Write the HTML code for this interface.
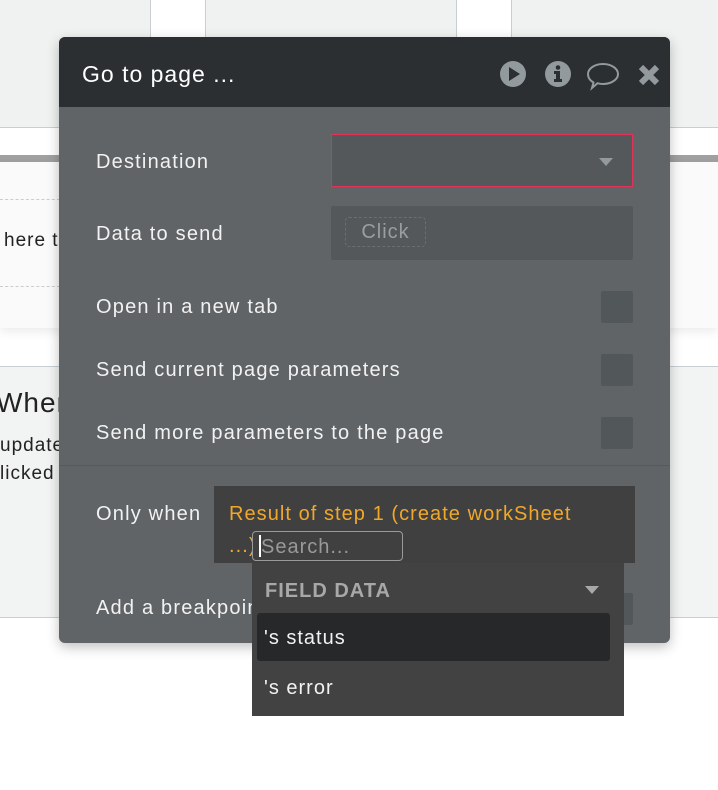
<!DOCTYPE html>
<html><head><style>
*{margin:0;padding:0;box-sizing:border-box}
body{width:718px;height:790px;position:relative;overflow:hidden;background:#fff;font-family:"Liberation Sans",sans-serif;letter-spacing:1px}
.a{position:absolute}
.lbl{position:absolute;left:96px;color:#f2f2f2;font-size:20px;line-height:24px;letter-spacing:1.2px}
.cb{position:absolute;left:601px;width:32px;height:32px;background:#52575a;border-radius:2px}
</style></head><body>
<div class="a" style="left:0;top:0;width:718px;height:128px;background:#f0f2f1;border-bottom:1px solid #c8ced2"></div>
<div class="a" style="left:150px;top:0;width:56px;height:128px;background:#fff;border-left:1px solid #c8ced2;border-right:1px solid #c8ced2"></div>
<div class="a" style="left:456px;top:0;width:56px;height:128px;background:#fff;border-left:1px solid #c8ced2;border-right:1px solid #c8ced2"></div>
<div class="a" style="left:0;top:155px;width:718px;height:7px;background:#a0a0a0"></div>
<div class="a" style="left:0;top:162px;width:718px;height:166px;background:#fafafa;box-shadow:0 4px 10px rgba(0,0,0,.08)"></div>
<div class="a" style="left:0;top:199px;width:60px;border-top:1px dashed #ccc"></div>
<div class="a" style="left:0;top:286px;width:60px;border-top:1px dashed #ccc"></div>
<div class="a" style="left:4px;top:230px;font-size:19px;color:#222">here t</div>
<div class="a" style="left:0;top:366px;width:718px;height:252px;background:#f2f3f3;border-top:1px solid #c8ced2;border-bottom:1px solid #c8ced2"></div>
<div class="a" style="left:-4px;top:387px;font-size:28px;color:#222">When</div>
<div class="a" style="left:0;top:432px;font-size:19px;color:#222;line-height:28px">update<br>licked</div>
<div class="a" style="left:59px;top:37px;width:611px;height:606px;background:#606467;border-radius:6px;box-shadow:0 4px 12px rgba(0,0,0,.25);overflow:hidden">
 <div class="a" style="left:0;top:0;width:611px;height:70px;background:#2b2f31"></div>
 <div class="a" style="left:23px;top:24px;color:#fff;font-size:23px;letter-spacing:1px">Go to page ...</div>
 <svg class="a" style="left:440px;top:22px" width="125" height="32" viewBox="0 0 125 32">
  <circle cx="14" cy="15" r="13" fill="#939a9e"/><path d="M10 8 L21 15 L10 22Z" fill="#2b2f31"/>
  <circle cx="59" cy="15" r="13" fill="#939a9e"/><circle cx="59" cy="8.5" r="2.3" fill="#2b2f31"/><path d="M55 12h6v8h2v3h-8v-3h2v-5h-2z" fill="#2b2f31"/>
  <path d="M104 5c8 0 15 4.3 15 10s-7 10-15 10c-2 0-4-.3-5.5-.8L93 29l1.5-5.5C91 21.5 89 18.5 89 15c0-5.7 7-10 15-10z" fill="none" stroke="#939a9e" stroke-width="2"/>
 </svg>
 <svg class="a" style="left:579px;top:27px" width="22" height="22" viewBox="0 0 22 22"><path d="M3 3L19 19M19 3L3 19" stroke="#939a9e" stroke-width="6"/></svg>
 <div class="a" style="left:0;top:428px;width:611px;border-top:1px solid #555a5d"></div>
</div>
<div class="lbl" style="top:150px">Destination</div>
<div class="a" style="left:331px;top:134px;width:302px;height:53px;background:#54585b;border:1px solid #e0335a"></div>
<div class="a" style="left:599px;top:158px;width:0;height:0;border-left:7px solid transparent;border-right:7px solid transparent;border-top:8px solid #939a9e"></div>
<div class="lbl" style="top:222px">Data to send</div>
<div class="a" style="left:331px;top:206px;width:302px;height:54px;background:#54585b;border-radius:2px"></div>
<div class="a" style="left:345px;top:217px;width:81px;height:30px;border:1px dashed #6a6e71;border-radius:4px;color:#9a9ea1;font-size:20px;text-align:center;line-height:28px">Click</div>
<div class="lbl" style="top:295px">Open in a new tab</div><div class="cb" style="top:291px"></div>
<div class="lbl" style="top:358px">Send current page parameters</div><div class="cb" style="top:354px"></div>
<div class="lbl" style="top:421px">Send more parameters to the page</div><div class="cb" style="top:417px"></div>
<div class="lbl" style="top:502px">Only when</div>
<div class="a" style="left:214px;top:486px;width:421px;height:77px;background:#404040"></div>
<div class="a" style="left:229px;top:498px;color:#f0a82a;font-size:20px;line-height:32px;letter-spacing:1.05px">Result of step 1 (create workSheet<br>...)</div>
<div class="a" style="left:252px;top:531px;width:151px;height:30px;border:1px solid #9a9a9a;border-radius:4px;background:#404040;color:#999;font-size:20px;padding-left:8px;line-height:30px">Search...</div>
<div class="a" style="left:259px;top:535px;width:2px;height:22px;background:#fff"></div>
<div class="lbl" style="top:596px">Add a breakpoint</div><div class="cb" style="top:593px"></div>
<div class="a" style="left:252px;top:563px;width:372px;height:153px;background:#424242"></div>
<div class="a" style="left:265px;top:580px;color:#a8a8a8;font-size:20px;font-weight:bold">FIELD DATA</div>
<div class="a" style="left:585px;top:586px;width:0;height:0;border-left:7px solid transparent;border-right:7px solid transparent;border-top:8px solid #a8a8a8"></div>
<div class="a" style="left:257px;top:613px;width:353px;height:48px;background:#272829;border-radius:3px"></div>
<div class="a" style="left:264px;top:627px;color:#f2f2f2;font-size:20px">'s status</div>
<div class="a" style="left:264px;top:677px;color:#f2f2f2;font-size:20px">'s error</div>
</body></html>
